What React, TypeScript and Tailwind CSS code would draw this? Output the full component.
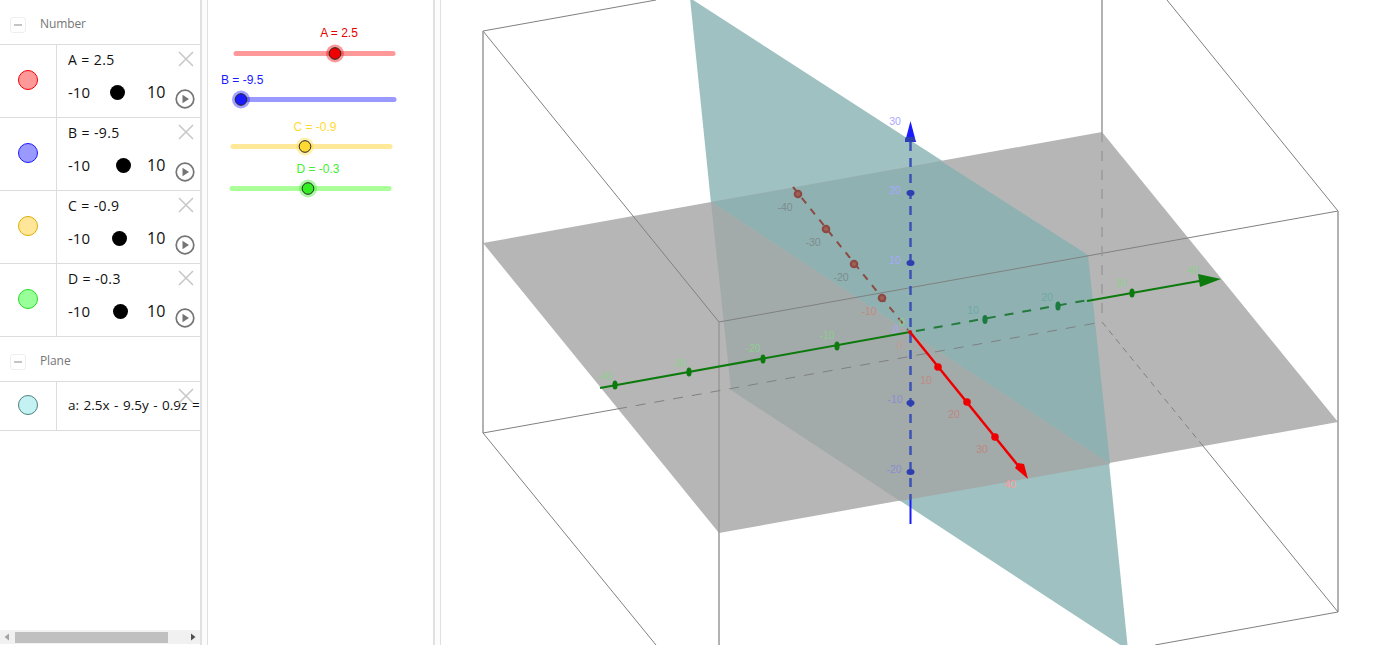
import React from "react";

const OPEN = "font-['Open_Sans','Noto_Sans',sans-serif]";

function Minus() {
  return (
    <div className="w-[16px] h-[16px] rounded-[3px] border border-[#eeeeee] flex items-center justify-center">
      <div className="w-[8px] h-[2px] bg-[#c4c4c4]" />
    </div>
  );
}

function Header({ title }: { title: string }) {
  return (
    <div className="h-[45px] pt-[6px] flex items-center pl-[10px] border-b border-[#dcdcdc]">
      <Minus />
      <span className="ml-[14px] -mt-[2px] text-[12px] tracking-[-0.1px] text-[#767676]">{title}</span>
    </div>
  );
}

function CloseX() {
  return (
    <svg className="absolute left-[178px] top-[6px]" width="16" height="16" viewBox="0 0 16 16">
      <path d="M1 1 L15 15 M15 1 L1 15" stroke="#c8c8c8" strokeWidth="1.6" fill="none" />
    </svg>
  );
}

function Play() {
  return (
    <svg className="absolute left-[175px] top-[44px]" width="20" height="20" viewBox="0 0 20 20">
      <circle cx="10" cy="10" r="8.8" fill="#fff" stroke="#757575" strokeWidth="1.7" />
      <path d="M7.5 5.8 L14 10 L7.5 14.2 Z" fill="#757575" />
    </svg>
  );
}

const rows = [
  { t: "A = 2.5", fill: "#ff9999", line: "#f00000", dot: 47.5 },
  { t: "B = -9.5", fill: "#9999ff", line: "#1a1aff", dot: 53.5 },
  { t: "C = -0.9", fill: "#ffe699", line: "#d9b000", dot: 49.5 },
  { t: "D = -0.3", fill: "#99ff99", line: "#22dd22", dot: 50 },
];

function NumberRow({ t, fill, line, dot }: { t: string; fill: string; line: string; dot: number }) {
  return (
    <div className="relative h-[73px] flex border-b border-[#dcdcdc]">
      <div className="w-[57px] shrink-0 border-r border-[#dcdcdc] flex items-center justify-center pb-[2px]">
        <div className="w-[20px] h-[20px] rounded-full border" style={{ background: fill, borderColor: line }} />
      </div>
      <div className="flex-1 pl-[11px] pt-[5px] text-[#111111]">
        <div className="h-[20px] leading-[20px] text-[14px] tracking-[0.4px]">{t}</div>
        <div className="mt-[11px] h-[22px] flex items-center text-[15px]">
          <span className="w-[30px]">-10</span>
          <span className="w-[15px] h-[15px] rounded-full bg-black" style={{ marginLeft: dot - 30 - 7.5 + 2 }} />
          <span className="absolute left-[147px] text-[16px]">10</span>
        </div>
      </div>
      <CloseX />
      <Play />
    </div>
  );
}

function Scrollbar() {
  return (
    <div className="h-[14px] bg-[#f1f1f1] flex items-center mt-auto mb-[1px]">
      <svg width="15" height="14" viewBox="0 0 15 14" className="shrink-0">
        <path d="M9 3.5 L4.5 7 L9 10.5 Z" fill="#a3a3a3" />
      </svg>
      <div className="w-[153px] h-[11px] mt-[1px] bg-[#c0c0c0]" />
      <div className="flex-1" />
      <svg width="15" height="14" viewBox="0 0 15 14" className="shrink-0">
        <path d="M6 3.5 L10.5 7 L6 10.5 Z" fill="#505050" />
      </svg>
    </div>
  );
}

function AlgebraPanel() {
  return (
    <div className={`w-[200px] shrink-0 flex flex-col overflow-hidden ${OPEN}`}>
      <Header title="Number" />
      {rows.map((r) => (
        <NumberRow key={r.t} {...r} />
      ))}
      <Header title="Plane" />
      <div className="relative h-[49px] flex border-b border-[#dcdcdc]">
        <div className="w-[57px] shrink-0 border-r border-[#dcdcdc] flex items-center justify-center pb-[2px]">
          <div className="w-[20px] h-[20px] rounded-full border border-[#4d7f7f] bg-[#c4f2f2]" />
        </div>
        <div className="flex-1 pl-[11px] pb-[2px] flex items-center whitespace-nowrap overflow-hidden text-[13.5px] [word-spacing:1px] text-[#111111]">
          a: 2.5x - 9.5y - 0.9z =
        </div>
        <CloseX />
      </div>
      <Scrollbar />
    </div>
  );
}

function Splitter() {
  return <div className="w-[8px] shrink-0 border-l-2 border-r border-[#e0e0e0] bg-[#fcfcfc]" />;
}

const sliders = [
  { label: "A = 2.5", lx: 339, ly: 37, anchor: "middle", tc: "#e60000", x1: 236, x2: 393, y: 53.5, kx: 335, track: "#ff9999", knob: "#f00000" },
  { label: "B = -9.5", lx: 221, ly: 84, anchor: "start", tc: "#1a1aff", x1: 238, x2: 394, y: 99.5, kx: 241, track: "#9999ff", knob: "#1a1aff" },
  { label: "C = -0.9", lx: 315, ly: 131, anchor: "middle", tc: "#ffd933", x1: 233, x2: 390, y: 146.5, kx: 305, track: "#ffe999", knob: "#ffd933" },
  { label: "D = -0.3", lx: 318, ly: 173, anchor: "middle", tc: "#44ee33", x1: 232, x2: 389, y: 188.5, kx: 308, track: "#aaff99", knob: "#33ee22" },
];

function SlidersPanel() {
  return (
    <div className="w-[225px] shrink-0 h-full bg-white">
      <svg width="225" height="645" viewBox="208 0 225 645" className="block">
        {sliders.map((s) => (
          <g key={s.label}>
            <text x={s.lx} y={s.ly} textAnchor={s.anchor as "middle" | "start"} fontFamily="Liberation Sans" fontSize="12" fill={s.tc}>
              {s.label}
            </text>
            <line x1={s.x1} x2={s.x2} y1={s.y} y2={s.y} stroke={s.track} strokeWidth="5" strokeLinecap="round" />
            <circle cx={s.kx} cy={s.y} r="9" fill={s.knob} opacity="0.4" />
            <circle cx={s.kx} cy={s.y} r="5.8" fill={s.knob} stroke="#222" strokeWidth="1" />
          </g>
        ))}
      </svg>
    </div>
  );
}

const L = "Liberation Sans";

function Lbl({ x, y, c, t }: { x: number; y: number; c: string; t: string }) {
  return (
    <text x={x} y={y} textAnchor="middle" dominantBaseline="central" fontFamily={L} fontSize="10.500" fill={c}>
      {t}
    </text>
  );
}

function Graph3D() {
  const gx: [number, number, string][] = [
    [605, 376, "-40"], [679, 363, "-30"], [753, 348, "-20"], [827, 335, "-10"], [902, 322, "0"],
    [973, 310, "10"], [1047, 297, "20"], [1121, 283, "30"], [1193, 270, "40"],
  ];
  const gt = [[615, 385], [689, 372], [763, 359], [837, 346], [985, 319.5], [1058, 306], [1132, 293]];
  const bl: [number, number, string][] = [[895, 121, "30"], [895, 190, "20"], [895, 260, "10"], [896, 329, "0"], [895, 399, "-10"], [894, 469, "-20"]];
  const rl: [number, number, string, string][] = [
    [785, 207, "-40", "#7e8c8c"], [813, 242, "-30", "#7e8c8c"], [841, 277, "-20", "#7e8c8c"], [869, 311, "-10", "#c08a80"],
    [900, 345, "0", "#c49a90"], [926, 380, "10", "#c08a80"], [954, 414, "20", "#bd8880"], [982, 449, "30", "#bd8880"], [1010, 484, "40", "#ff9a9a"],
  ];
  return (
    <div className="flex-1 min-w-0 h-full overflow-hidden bg-white">
      <svg width="941" height="645" viewBox="441 0 941 645" className="block">
        <polygon points="690,-2 1088,255 1128,650 731,390 711,203" fill="#9fc1c1" />
        <polygon points="483,243 1102,132 1338,422 719,533" fill="#b6b6b6" />
        <polygon points="711,202 941,161 1088,255 1110,464" fill="#8fb1b1" />
        <polygon points="711,202 1110,464 900,501 731,390" fill="#a3aaaa" />

        {/* cube */}
        <g stroke="#808080" strokeWidth="1" fill="none">
          <path d="M483 31 L719 322 M483 31 L656 0 M719 322 L1338 211 M1338 211 L1167 0 M483 433 L656 645 M1338 612 L1155 645" />
          <path d="M483 31 L483 433 M1338 211 L1338 612 M719 322 L719 645 M1102 0 L1102 132" stroke="#999" strokeWidth="1.500" />
          <path d="M483 433 L617 409" />
          <path d="M617 409 L1102 322" strokeDasharray="10 9" />
          <path d="M1102 132 L1102 322" strokeDasharray="10 9" stroke="#9a9a9a" strokeWidth="1.500" />
          <path d="M1102 322 L1203 446" strokeDasharray="6 5" />
          <path d="M1203 446 L1338 612" />
        </g>

        {/* red negative */}
        <path d="M793 187 L908 330" stroke="#8c4a42" strokeWidth="2" strokeDasharray="7 7" fill="none" />
        {[[798, 194], [826, 229], [854, 264], [882, 298]].map(([x, y]) => (
          <circle key={x} cx={x} cy={y} r="3.200" fill="#a06058" stroke="#8c4a42" strokeWidth="2.200" />
        ))}

        {/* green */}
        <path d="M600 388 L910 332" stroke="#0d7a0d" strokeWidth="2" fill="none" />
        <path d="M916 331 L1088 300" stroke="#237a3a" strokeWidth="2" strokeDasharray="9 9" fill="none" />
        <path d="M1087 301 L1205 280" stroke="#0d7a0d" strokeWidth="2" fill="none" />
        <polygon points="1198,274 1221,279 1200,287" fill="#0d7a0d" />
        {gt.map(([x, y]) => (
          <ellipse key={x} cx={x} cy={y} rx="2.600" ry="4.500" fill={x > 910 && x < 1090 ? "#1a7a40" : "#0d7a0d"} />
        ))}

        {/* blue */}
        <path d="M910.500 142 L910.500 500" stroke="#3d52b5" strokeWidth="2.500" strokeDasharray="9 7" fill="none" />
        <path d="M910.500 500 L910.500 524" stroke="#1a1aff" strokeWidth="2" fill="none" />
        <polygon points="905,142 910.500,121 916,142" fill="#1a1aff" />
        <rect x="905" y="137" width="10" height="5" rx="2" fill="#2d3fb0" />
        {[193, 263, 403, 472].map((y) => (
          <ellipse key={y} cx="910.500" cy={y} rx="4" ry="3" fill="#2d3fb0" />
        ))}

        {/* red positive */}
        <path d="M910 332 L1020 468" stroke="#ee0000" strokeWidth="2.400" fill="none" />
        <polygon points="1015,468 1018,463 1024,464 1028,479" fill="#ee0000" />
        {[[938, 367], [967, 402], [995, 437]].map(([x, y]) => (
          <circle key={x} cx={x} cy={y} r="3.800" fill="#ee0000" />
        ))}
        <circle cx="910" cy="332" r="2" fill="#d01010" />

        {/* labels */}
        {gx.map(([x, y, t]) => (
          <Lbl key={t} x={x} y={y} t={t} c={x > 930 && x < 1090 ? "#6fa8a8" : "#8fce8f"} />
        ))}
        {bl.map(([x, y, t]) => (
          <Lbl key={t} x={x} y={y} t={t} c={t === "-10" || t === "-20" ? "#8a8ed0" : "#a8a8ff"} />
        ))}
        {rl.map(([x, y, t, c]) => (
          <Lbl key={t} x={x} y={y} t={t} c={c} />
        ))}
      </svg>
    </div>
  );
}

export default function App() {
  return (
    <div className="w-[1382px] h-[647px] bg-white overflow-hidden">
      <div className="h-[645px] flex">
        <AlgebraPanel />
        <Splitter />
        <SlidersPanel />
        <Splitter />
        <Graph3D />
      </div>
    </div>
  );
}
